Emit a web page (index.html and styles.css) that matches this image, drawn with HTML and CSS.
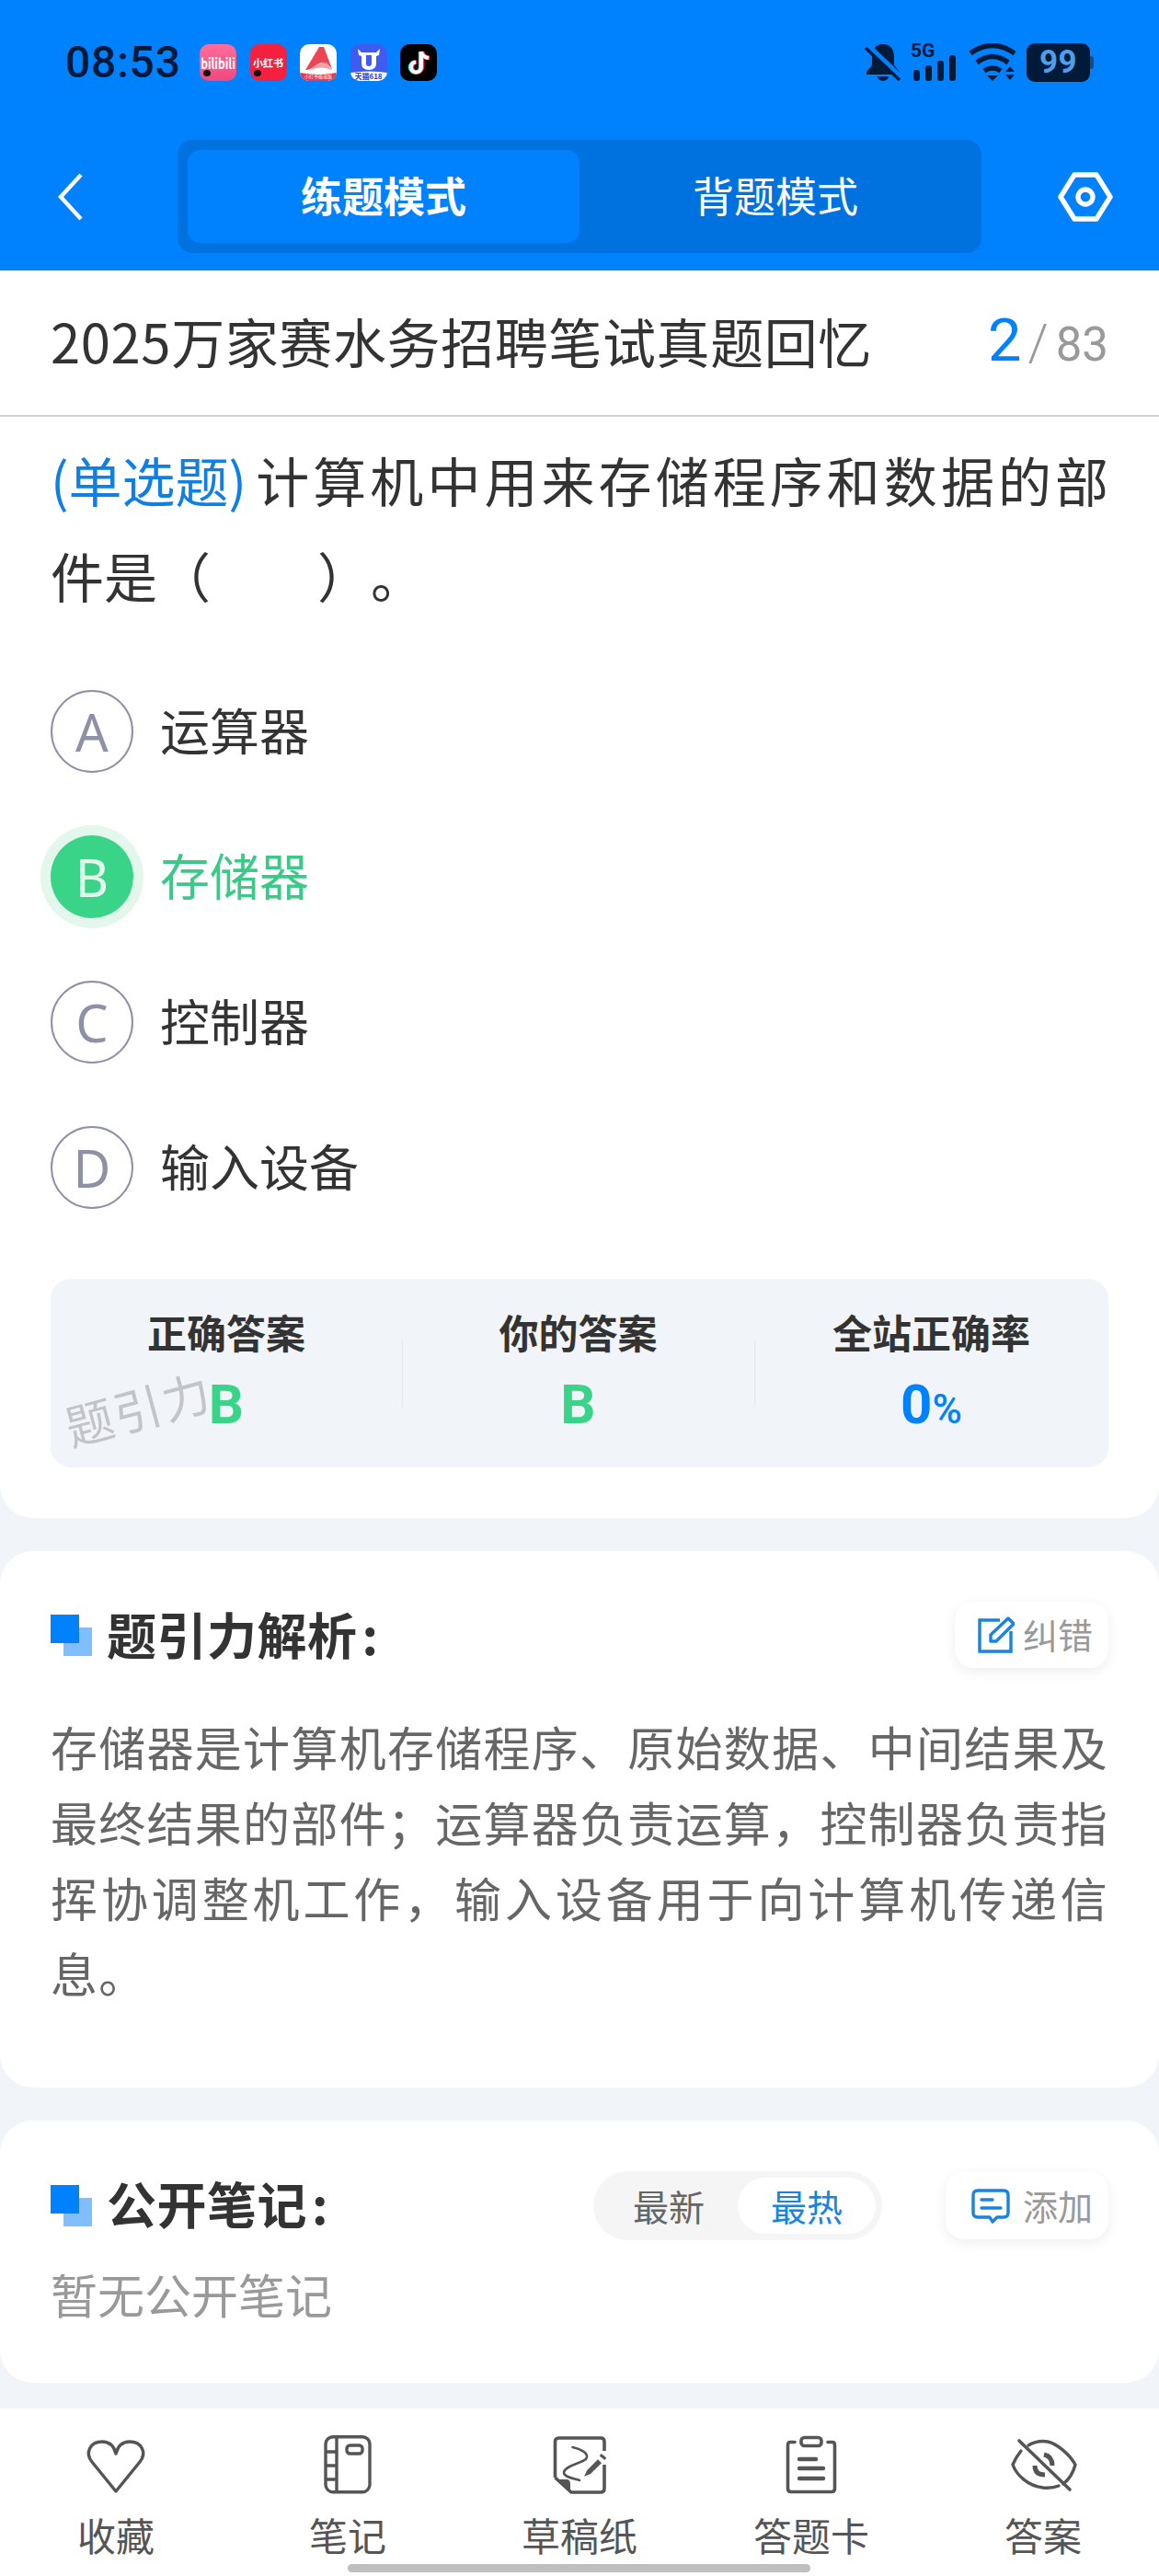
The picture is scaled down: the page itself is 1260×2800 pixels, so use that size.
FILE: index.html
```html
<!DOCTYPE html>
<html lang="zh-CN">
<head>
<meta charset="utf-8">
<title>练题模式</title>
<link rel="stylesheet" href="styles.css">
</head>
<body>
<div class="page">
  <header class="header">
    <div class="status">
      <span class="time">08:53</span>
      <div class="apps">
        <span class="app app-bili"><span class="app-tx app-tx-b">bilibili</span><i class="dot"></i></span>
        <span class="app app-xhs"><span class="app-tx">小红书</span><i class="dot"></i></span>
        <span class="app app-a">
          <svg viewBox="0 0 40 40" width="40" height="40"><path d="M21 3 H26 L35 27 Q29 19 22 20 L13 26 Q10 28 6 28Z" fill="#ef4453"/><path d="M11 28 Q22 17 30 21 L35 28 Q24 23 11 28Z" fill="#f6a0a5"/><path d="M0 31 Q20 35 40 31 V40 H0Z" fill="#e63a4b"/></svg>
          <span class="app-mini app-mini-a">小红书极速版</span>
        </span>
        <span class="app app-t">
          <svg viewBox="0 0 40 40" width="40" height="40"><path d="M8 5 L12 9 H28 L32 5 L31 12 L28 13 V21 Q28 28 20 28 Q12 28 12 21 V13 L9 12Z" fill="#fff"/><path d="M17 12 H23 V21 Q23 24 20 24 Q17 24 17 21Z" fill="#3f5bf0"/><path d="M0 31 Q20 28 40 31 V40 H0Z" fill="#fff"/></svg>
          <span class="app-mini">天猫618</span>
        </span>
        <span class="app app-tt">
          <svg viewBox="0 0 40 40" width="40" height="40"><path d="M22 8 V25 A5.5 5.5 0 1 1 16 19.5" fill="none" stroke="#25f4ee" stroke-width="4.4"/><path d="M22 8 Q23 14 30 15" fill="none" stroke="#25f4ee" stroke-width="4.4"/><path d="M24 8 V25 A5.5 5.5 0 1 1 18 19.5" fill="none" stroke="#fe2c55" stroke-width="4.4"/><path d="M24 8 Q25 14 32 15" fill="none" stroke="#fe2c55" stroke-width="4.4"/><path d="M23 8 V25 A5.5 5.5 0 1 1 17 19.5" fill="none" stroke="#fff" stroke-width="4"/><path d="M23 8 Q24 14 31 15" fill="none" stroke="#fff" stroke-width="4"/></svg>
        </span>
      </div>
      <div class="sys">
        <svg class="ic-bell" viewBox="0 0 40 42" width="40" height="42"><path d="M20 1 C11 1 8 8 8 15 V24 L2 31 V34 H38 V31 L32 24 V15 C32 8 29 1 20 1Z" fill="#001a3a"/><path d="M14 36 A6 5 0 0 0 26 36Z" fill="#001a3a"/><path d="M3 3 L40 38" stroke="#0082ff" stroke-width="7"/><path d="M1 5 L38 40" stroke="#001a3a" stroke-width="3.4"/></svg>
        <div class="sig">
          <span class="five">5G</span>
          <svg viewBox="0 0 46 28" width="46" height="28" class="bars"><rect x="0" y="16" width="7" height="12" rx="3"/><rect x="13" y="11" width="7" height="17" rx="3"/><rect x="26" y="6" width="7" height="22" rx="3"/><rect x="39" y="0" width="7" height="28" rx="3"/></svg>
        </div>
        <svg class="ic-wifi" viewBox="0 0 52 42" width="52" height="42"><path d="M2 11 Q26 -6 50 11" fill="none" stroke="#001a3a" stroke-width="5.500"/><path d="M9 21 Q26 8 43 21" fill="none" stroke="#001a3a" stroke-width="5.500"/><path d="M17 30 Q26 24 35 30" fill="none" stroke="#001a3a" stroke-width="5.500"/><path d="M20 35 H32 L26 41Z" fill="#001a3a"/><path d="M40 31 L45 25 L50 31Z M40 34 H50 L45 40Z" fill="#001a3a"/></svg>
        <div class="batt"><span class="batt-n">99</span></div><i class="nub"></i>
      </div>
    </div>
    <nav class="bar">
      <svg class="back" viewBox="0 0 28 52" width="28" height="52"><path d="M26 2 L4 26 L26 50" fill="none" stroke="#fff" stroke-width="4.4"/></svg>
      <div class="tabs">
        <span class="tab tab-on">练题模式</span>
        <span class="tab">背题模式</span>
      </div>
      <svg class="gear" viewBox="0 0 60 54" width="60" height="54"><path d="M18 3 H42 L57 27 L42 51 H18 L3 27Z" fill="none" stroke="#fff" stroke-width="5.4" stroke-linejoin="round"/><circle cx="30" cy="27" r="8" fill="none" stroke="#fff" stroke-width="5.4"/></svg>
    </nav>
  </header>

  <main class="main">
    <section class="card card-q">
      <div class="title-row">
        <h1 class="title">2025万家赛水务招聘笔试真题回忆</h1>
        <div class="count"><b class="cur">2</b><span class="slash">/</span><span class="tot">83</span></div>
      </div>
      <div class="q-body">
        <p class="q"><span class="q-line"><span class="q-type">(单选题)</span>计算机中用来存储程序和数据的部</span>件是（&emsp;&emsp;）。</p>
        <ul class="opts">
          <li class="opt"><span class="ltr">A</span><span class="opt-t">运算器</span></li>
          <li class="opt opt-on"><span class="ltr">B</span><span class="opt-t">存储器</span></li>
          <li class="opt"><span class="ltr">C</span><span class="opt-t">控制器</span></li>
          <li class="opt"><span class="ltr">D</span><span class="opt-t">输入设备</span></li>
        </ul>
        <div class="stats">
          <div class="stat"><span class="s-l">正确答案</span><span class="s-v green">B</span></div>
          <div class="stat"><span class="s-l">你的答案</span><span class="s-v green">B</span></div>
          <div class="stat"><span class="s-l">全站正确率</span><span class="s-v blue">0<small>%</small></span></div>
          <span class="wm">题引力</span>
        </div>
      </div>
    </section>

    <section class="card card-a">
      <div class="head">
        <span class="sq"></span>
        <h2 class="h">题引力解析<span class="colon">:</span></h2>
        <button class="btn">
          <svg viewBox="0 0 40 40" width="40" height="40"><path d="M24 4 H2 V38 H36 V16" fill="none" stroke="#1a82e2" stroke-width="3.4"/><path d="M14 27 V20 L33 2 L39 8 L20 27Z" fill="none" stroke="#1a82e2" stroke-width="3.4" stroke-linejoin="round"/></svg>
          <span class="btn-t">纠错</span>
        </button>
      </div>
      <p class="txt">存储器是计算机存储程序、原始数据、中间结果及最终结果的部件；运算器负责运算，控制器负责指挥协调整机工作，输入设备用于向计算机传递信息。</p>
    </section>

    <section class="card card-n">
      <div class="head head-n">
        <span class="sq"></span>
        <h2 class="h">公开笔记<span class="colon">:</span></h2>
        <div class="seg"><span class="seg-i">最新</span><span class="seg-i seg-on">最热</span></div>
        <button class="btn btn-add">
          <svg viewBox="0 0 42 38" width="42" height="38"><path d="M7 2 H35 Q40 2 40 7 V26 Q40 31 35 31 H28 L23 36 L20 31 H7 Q2 31 2 26 V7 Q2 2 7 2Z" fill="none" stroke="#1a82e2" stroke-width="3.4" stroke-linejoin="round"/><path d="M11 12 H23 M11 21 H32" stroke="#1a82e2" stroke-width="3.4" stroke-linecap="round"/></svg>
          <span class="btn-t">添加</span>
        </button>
      </div>
      <p class="empty">暂无公开笔记</p>
    </section>
  </main>

  <footer class="nav">
    <div class="ni">
      <svg viewBox="0 0 74 66" width="74" height="66"><path d="M37 62 L11 30 C3 20 9 8 22 8 C30 8 35 13 37 21 C39 13 44 8 52 8 C65 8 71 20 63 30Z" fill="none" stroke="#555" stroke-width="3.400" stroke-linejoin="round"/></svg>
      <span>收藏</span>
    </div>
    <div class="ni">
      <svg viewBox="0 0 74 66" width="74" height="66"><rect x="13" y="2.700" width="48" height="60" rx="8" fill="none" stroke="#555" stroke-width="3.400"/><path d="M25 3 V63 M13 19 H25 M13 34 H25 M13 49 H25" fill="none" stroke="#555" stroke-width="3.400"/><rect x="36" y="12" width="17" height="9" rx="3.500" fill="none" stroke="#555" stroke-width="3.400"/></svg>
      <span>笔记</span>
    </div>
    <div class="ni">
      <svg viewBox="0 0 74 66" width="74" height="66"><g transform="translate(2 0)"><path d="M8.500 47 V8 Q8.500 4 12.500 4 H58 Q62 4 62 8 V18 M62 33 V59 Q62 63 58 63 H26 L8.500 47" fill="none" stroke="#555" stroke-width="3.600" stroke-linejoin="round"/><path d="M10 49 H22 Q25 50 25 54 V62Z" fill="#555"/><path d="M27.500 14 C36 16 44 20 43 25 C42 31 20 33 18 41 C17 46 28 48 35 50" fill="none" stroke="#555" stroke-width="2.600" stroke-linecap="round"/><path d="M43.300 39 L55 27.300 L59 31.300 L46.700 43.300 L40 45.700Z" fill="#555"/><path d="M57.700 22.300 L63.300 26.700" stroke="#555" stroke-width="3"/></g></svg>
      <span>草稿纸</span>
    </div>
    <div class="ni">
      <svg viewBox="0 0 74 66" width="74" height="66"><g transform="translate(2 0)"><path d="M17 8.500 H12 Q9.500 8.500 9.500 12 V59 Q9.500 62.500 13 62.500 H57 Q60.500 62.500 60.500 59 V12 Q60.500 8.500 58 8.500 H53" fill="none" stroke="#555" stroke-width="3.600" stroke-linecap="round"/><rect x="24" y="3.500" width="22" height="9" rx="3.500" fill="none" stroke="#555" stroke-width="3.600"/><path d="M22 27 H40 M22 37 H48 M22 48 H48" stroke="#555" stroke-width="4.400" stroke-linecap="round"/></g></svg>
      <span>答题卡</span>
    </div>
    <div class="ni">
      <svg viewBox="0 0 74 66" width="74" height="66"><path d="M21 12 C28 8 36 7 42 8 C52 10 66 22 72 33 C70 41 65 49 59 54" fill="none" stroke="#555" stroke-width="3.400" stroke-linecap="round"/><path d="M13 18 C9 23 6 28 4 33 C8 44 20 56 37 58 C43 58.500 49 58 54 56" fill="none" stroke="#555" stroke-width="3.400" stroke-linecap="round"/><path d="M38 22 Q47 24 47 34 M28 34 Q28 44 39 44" fill="none" stroke="#555" stroke-width="5"/><path d="M11 7 L66 60" stroke="#555" stroke-width="3.600" stroke-linecap="round"/></svg>
      <span>答案</span>
    </div>
    <i class="home"></i>
  </footer>
</div>
</body>
</html>
```
FILE: styles.css
```css
* { box-sizing: border-box; }
html, body { margin: 0; padding: 0; }
body {
  background: #f1f5f9;
  font-family: "Noto Sans CJK SC", "Noto Sans", sans-serif;
  color: #333;
}
h1, h2, p, ul { margin: 0; padding: 0; font-weight: inherit; }
ul { list-style: none; }
.page { width: 1260px; height: 2800px; display: flex; flex-direction: column; overflow: hidden; }

/* header */
.header { height: 294px; flex: none; background: #0082ff; display: flex; flex-direction: column; }
.status { height: 152px; padding: 47px 71px 0 71px; display: flex; align-items: flex-start; }
.time {
  font-family: Roboto, sans-serif; font-weight: 500; font-size: 48px; line-height: 42px;
  letter-spacing: 0.8px; color: #001a3a; width: 146px; flex: none;
}
.apps { display: flex; gap: 14.500px; padding-top: 1px; }
.app { position: relative; width: 40px; height: 40px; border-radius: 10px; overflow: hidden; display: flex; align-items: center; justify-content: center; flex: none; }
.app-bili { background: linear-gradient(#ff6d9a, #f2487f); }
.app-xhs { background: #f5203f; }
.app-a { background: #fff; }
.app-t { background: #3f5bf0; }
.app-tt { background: #000; }
.app-tx { color: #fff; font-weight: 700; font-size: 11px; line-height: 14px; white-space: nowrap; }
.app-tx-b { font-size: 12px; transform: scale(1, 1.3); }
.app-mini { position: absolute; left: 0; right: 0; bottom: 1px; text-align: center; font-size: 8px; line-height: 9px; color: #2540c8; font-weight: 700; white-space: nowrap; }
.app-mini-a { color: #fff; font-size: 5px; font-weight: 400; }
.dot { position: absolute; left: 4px; bottom: 5px; width: 8px; height: 7px; border-radius: 50%; background: #111; }
.sys { margin-left: auto; display: flex; align-items: flex-start; }
.ic-bell { flex: none; margin-right: 10px; }
.sig { position: relative; width: 50px; height: 42px; flex: none; display: flex; flex-direction: column; margin-right: 13px; }
.five { font-family: Roboto, sans-serif; font-weight: 700; font-size: 21px; line-height: 16px; color: #001a3a; }
.bars { position: absolute; left: 3px; top: 13px; fill: #001a3a; }
.ic-wifi { flex: none; margin-right: 11px; }
.batt { width: 69px; height: 42px; background: #001a3a; border-radius: 9px; display: flex; align-items: center; justify-content: center; flex: none; }
.batt-n { font-family: Roboto, sans-serif; font-weight: 700; font-size: 35px; line-height: 42px; color: #4f9eec; letter-spacing: 0.500px; }
.nub { width: 4px; height: 14px; margin-top: 14px; background: #0f4f90; border-radius: 0 3px 3px 0; flex: none; }

.bar { height: 123px; padding: 0 50px 0 62px; display: flex; align-items: center; }
.back { flex: none; margin-right: 103px; }
.gear { flex: none; margin-left: auto; }
.tabs { width: 874px; height: 123px; flex: none; padding: 11px; background: #0072e0; border-radius: 16px; display: flex; }
.tab { width: 427px; display: flex; align-items: center; justify-content: center; color: #fff; font-size: 45px; font-weight: 400; border-radius: 14px; padding-bottom: 4px; }
.tab-on { background: #0082ff; font-weight: 700; }

/* main */
.main { flex: 1; display: flex; flex-direction: column; gap: 36px; min-height: 0; }
.card { background: #fff; flex: none; }
.card-q { height: 1356px; border-radius: 0 0 36px 36px; }
.title-row { height: 159px; padding: 0 55px 6px; display: flex; align-items: center; justify-content: space-between; border-bottom: 2px solid #d0d0d0; }
.title { font-size: 58px; line-height: 80px; letter-spacing: 0.600px; color: #333; white-space: nowrap; }
.count { display: flex; align-items: baseline; color: #999; }
.cur { font-size: 65px; line-height: 80px; font-weight: 400; color: #0082ff; font-family: Roboto, sans-serif; }
.slash { font-size: 56px; margin: 0 8px 0 7px; font-family: Roboto, sans-serif; font-weight: 300; }
.tot { font-size: 51px; font-family: Roboto, sans-serif; }

.q-body { padding: 16px 55px 0; }
.q { font-size: 58px; line-height: 104px; color: #333; text-spacing-trim: space-all; }
.q-line { display: block; text-align: justify; text-align-last: justify; }
.q-type { display: inline-block; color: #0f7fe8; margin-right: 6px; }
.opts { margin-top: 39px; display: flex; flex-direction: column; }
.opt { height: 158px; display: flex; align-items: center; gap: 29px; }
.ltr {
  width: 90px; height: 90px; border-radius: 50%; border: 2.500px solid #8d90a6; color: #8d90a6;
  font-size: 56px; font-family: "Noto Sans", sans-serif; font-weight: 400; display: flex; align-items: center; justify-content: center; flex: none;
}
.opt-t { font-size: 54px; color: #333; padding-bottom: 6px; }
.opt-on .ltr { background: #3ad488; border: 0; color: #e3f8ec; box-shadow: 0 0 0 11px #e3f7ed; }
.opt-on .opt-t { color: #3cc988; }

.stats { position: relative; height: 205px; margin-top: 42px; background: #f1f5f9; border-radius: 22px; display: grid; grid-template-columns: 382px 383px 385px; }
.stat { position: relative; display: flex; flex-direction: column; align-items: center; padding-top: 28px; }
.stat + .stat::before { content: ""; position: absolute; left: 0; top: 66px; height: 73px; width: 1px; background: #e4e8ec; }
.s-l { font-size: 43px; line-height: 58px; font-weight: 700; color: #333; }
.s-v { font-family: Roboto, sans-serif; font-size: 60px; line-height: 68px; font-weight: 700; margin-top: 17px; }
.s-v small { font-size: 44px; font-weight: 500; }
.green { color: #3ad488; }
.blue { color: #0082ff; }
.wm { position: absolute; left: 14px; top: 110px; font-size: 52px; line-height: 60px; font-weight: 400; letter-spacing: 2px; color: #c2c4c7; transform: rotate(-15deg); white-space: nowrap; }

/* sections */
.card-a { height: 583px; border-radius: 36px; padding: 55px 55px 0; }
.card-n { height: 285px; border-radius: 36px; padding: 55px 55px 0; }
.head { display: flex; align-items: center; height: 72px; }
.sq { position: relative; width: 45px; height: 45px; flex: none; margin-right: 16px; }
.sq::before { content: ""; position: absolute; left: 14px; top: 14px; width: 31px; height: 31px; background: #80bfff; }
.sq::after { content: ""; position: absolute; left: 0; top: 0; width: 31px; height: 31px; background: #0082ff; }
.h { font-size: 54px; line-height: 70px; font-weight: 700; color: #333; letter-spacing: 0.500px; white-space: nowrap; padding-bottom: 2px; }
.colon { margin-left: 5px; }
.btn {
  margin-left: auto; height: 72px; padding: 0 17px 0 25px; border: 0; background: #fff; border-radius: 20px;
  box-shadow: 0 4px 14px rgba(0,0,0,.07); display: flex; align-items: center; gap: 9px; color: #999;
  font-family: "Noto Sans CJK SC", sans-serif; font-size: 38px;
}
.btn-t { padding-bottom: 3px; }
.txt { margin-top: 44px; font-size: 51px; line-height: 82px; letter-spacing: 1.200px; color: #666; text-align: justify; }
.empty { margin-top: 22px; font-size: 51px; line-height: 72px; color: #999; }
.head-n { height: 75px; }
.head-n .h { padding-bottom: 5px; }
.seg { margin-left: auto; margin-right: 69px; width: 314px; height: 75px; padding: 7px; background: #f5f5f5; border-radius: 38px; display: flex; justify-content: space-between; }
.seg-i { width: 150px; font-size: 39px; display: flex; align-items: center; justify-content: center; color: #666; border-radius: 31px; padding-bottom: 2px; }
.seg-on { background: #fff; color: #1a82e2; }
.btn-add { margin-left: 0; padding: 0 17px 0 28px; gap: 14px; height: 73px; }

/* bottom nav */
.nav { position: relative; height: 182px; flex: none; background: #fff; display: grid; grid-template-columns: repeat(5, 252px); }
.ni { display: flex; flex-direction: column; align-items: center; padding-top: 28px; font-size: 42px; line-height: 60px; color: #555; }
.ni svg { flex: none; margin-bottom: 13px; }
.home { position: absolute; left: 378px; top: 169px; width: 503px; height: 9px; border-radius: 5px; background: #bfbfbf; }
```
